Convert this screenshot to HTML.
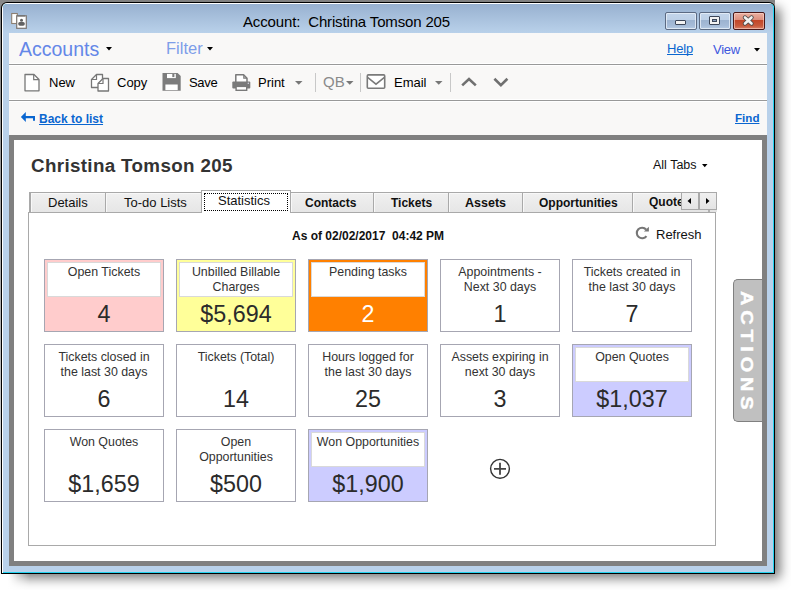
<!DOCTYPE html>
<html><head><meta charset="utf-8">
<style>
*{box-sizing:border-box;margin:0;padding:0}
html,body{width:791px;height:590px;overflow:hidden;background:#fff;font-family:"Liberation Sans",sans-serif;position:relative}
.a{position:absolute}
.t{position:absolute;white-space:pre;line-height:1;text-decoration-skip-ink:none}
.card{position:absolute;width:120px;height:73px;border:1px solid #a6a6b2;background:#fff}
.hd{position:absolute;left:2px;top:2px;width:114px;height:35px;background:#fff;border:1px solid #d9d9d9}
.nb .hd{border-color:#fff}
.tt{position:absolute;left:0;top:2px;width:112px;text-align:center;font-size:12.4px;line-height:15px;color:#333;white-space:nowrap}
.vv{position:absolute;left:0;top:42px;width:118px;text-align:center;font-size:23.3px;line-height:24px;color:#2b2b2b;white-space:nowrap}
.tab{position:absolute;top:192px;height:21px;border:1px solid #a9a9a9;background:linear-gradient(#f0f0f0,#e6e6e6);box-shadow:inset 1px 1px 0 #f8f8f8}
.tl{position:absolute;top:196px;font-size:13px;line-height:1;color:#111;white-space:pre}
.tb{font-weight:bold;font-size:12px;top:197px}
</style></head><body>
<!-- shadow / backdrop -->
<div class="a" style="left:0;top:0;width:775px;height:2px;background:#8a8a8a"></div>
<div class="a" style="left:0;top:0;width:9px;height:9px;background:#8a8a8a"></div>
<div class="a" style="left:766px;top:0;width:9px;height:7px;background:#8a8a8a"></div>
<div class="a" style="left:0;top:0;width:1px;height:574px;background:linear-gradient(#8a8a8a,#bdbdbd 60%,#fff)"></div>
<div class="a" style="left:1px;top:2px;width:774px;height:572px;box-shadow:6px 5px 11px -1px rgba(0,0,0,.55)"></div>
<div class="a" style="left:0;top:574px;width:30px;height:16px;background:linear-gradient(to right,#fff 25%,rgba(255,255,255,0))"></div>
<!-- window -->
<div class="a" style="left:1px;top:2px;width:774px;height:572px;background:#000;border-radius:6px 6px 0 0"></div>
<div class="a" style="left:2px;top:3px;width:772px;height:570px;background:#fff;border-radius:5px 5px 0 0"></div>
<div class="a" style="left:3px;top:4px;width:771px;height:569px;background:#22d3f0;border-radius:4px 4px 0 0"></div>
<div class="a" style="left:3px;top:4px;width:770px;height:568px;background:linear-gradient(#98b1d0,#b9d1ea 29px,#b9d1ea);border-radius:4px 4px 0 0"></div>

<!-- title icon -->
<svg class="a" style="left:8px;top:10px" width="24" height="22" viewBox="0 0 24 22">
 <rect x="3.7" y="3.5" width="5.6" height="10" fill="#fff" stroke="#8c7f72" stroke-width="1.1"/>
 <rect x="8.7" y="5.8" width="9.6" height="12.5" fill="#fff" stroke="#7a7470" stroke-width="1.2"/>
 <rect x="9.3" y="5.3" width="7.8" height="1.2" fill="#6f6f6f"/>
 <circle cx="13.5" cy="10.2" r="1.5" fill="#5f5f5f"/>
 <rect x="10.2" y="11.9" width="6.6" height="3.8" rx="1.7" fill="#626262"/>
</svg>
<div class="t" style="left:243px;top:14px;font-size:15px;color:#000;letter-spacing:-0.15px">Account:  Christina Tomson 205</div>
<!-- caption buttons -->
<div class="a" style="left:665px;top:12px;width:32px;height:18px;border:1px solid #5b6a82;border-radius:2px;background:linear-gradient(#c3d5ea,#bdd0e7 44%,#9cb3d0 46%,#a6bcd8 80%,#b7cce5);box-shadow:inset 0 0 0 1px rgba(235,242,250,.75)"></div>
<div class="a" style="left:675px;top:20px;width:11px;height:5px;border:1px solid #3c4658;border-radius:1px;background:#f2f2f2"></div>
<div class="a" style="left:699px;top:12px;width:32px;height:18px;border:1px solid #5b6a82;border-radius:2px;background:linear-gradient(#c3d5ea,#bdd0e7 44%,#9cb3d0 46%,#a6bcd8 80%,#b7cce5);box-shadow:inset 0 0 0 1px rgba(235,242,250,.75)"></div>
<div class="a" style="left:709px;top:16px;width:11px;height:9px;border:1px solid #3c4658;border-radius:1px;background:#f2f2f2"></div>
<div class="a" style="left:712px;top:19px;width:5px;height:3px;background:#8aa0bf;border:1px solid #3c4658"></div>
<div class="a" style="left:733px;top:12px;width:32px;height:18px;border:1px solid #4a1818;border-radius:2px;background:linear-gradient(#eab0a2,#dd8e7c 44%,#c24628 46%,#c85a3c 80%,#d8826a);box-shadow:inset 0 0 0 1px rgba(255,220,210,.55)"></div>
<svg class="a" style="left:741px;top:14px" width="16" height="13" viewBox="0 0 16 13"><path d="M4 3.5L10.5 9.5M10.5 3.5L4 9.5" stroke="#4a4a4a" stroke-width="4.4" stroke-linecap="round"/><path d="M4 3.5L10.5 9.5M10.5 3.5L4 9.5" stroke="#f2f2f2" stroke-width="2.6" stroke-linecap="round"/></svg>
<!-- content top area -->
<div class="a" style="left:9px;top:33px;width:758px;height:102px;background:#f9f8f7"></div>
<div class="a" style="left:9px;top:63px;width:758px;height:1px;background:#fff"></div>
<div class="a" style="left:9px;top:64px;width:758px;height:1px;background:#999"></div>
<div class="a" style="left:9px;top:65px;width:758px;height:1px;background:#fff"></div>
<div class="a" style="left:9px;top:99px;width:758px;height:1px;background:#fff"></div>
<div class="a" style="left:9px;top:100px;width:758px;height:1px;background:#999"></div>
<div class="a" style="left:9px;top:101px;width:758px;height:1px;background:#fff"></div>
<!-- nav row -->
<div class="t" style="left:19px;top:40px;font-size:19.5px;color:#6487e8">Accounts</div>
<svg class="a" style="left:106px;top:47px" width="6" height="4"><path d="M0 0h6l-3 3.5z" fill="#000"/></svg>
<div class="t" style="left:166px;top:40px;font-size:16.5px;color:#7d9de9">Filter</div>
<svg class="a" style="left:207px;top:47px" width="6" height="4"><path d="M0 0h6l-3 3.5z" fill="#000"/></svg>
<div class="t" style="left:667px;top:42px;font-size:13px;color:#0a66d0;text-decoration:underline;letter-spacing:-0.2px">Help</div>
<div class="t" style="left:713px;top:43px;font-size:13px;color:#3d57de;letter-spacing:-0.25px">View</div>
<svg class="a" style="left:754px;top:48px" width="6" height="4"><path d="M0 0h6l-3 3.5z" fill="#000"/></svg>

<!-- toolbar -->
<svg class="a" style="left:20px;top:71px" width="25" height="23" viewBox="0 0 25 23">
 <path d="M5 3.5H14L19 8.5V19.8H5Z" fill="#fff" stroke="#777" stroke-width="1.3" stroke-linejoin="round"/>
 <path d="M13.7 3.5V8.7H19" fill="none" stroke="#777" stroke-width="1.2"/>
</svg>
<div class="t" style="left:49px;top:76px;font-size:13px;color:#000">New</div>
<svg class="a" style="left:88px;top:71px" width="25" height="23" viewBox="0 0 25 23">
 <path d="M3.5 8.5L8.5 3.5H14.5V16.5H3.5Z" fill="#fff" stroke="#777" stroke-width="1.3" stroke-linejoin="round"/>
 <path d="M3.5 8.5H8.5V3.5" fill="none" stroke="#777" stroke-width="1.2"/>
 <path d="M10 12.5L15 7.5H20.5V20H10Z" fill="#fff" stroke="#777" stroke-width="1.3" stroke-linejoin="round"/>
 <path d="M10 12.5H15V7.5" fill="none" stroke="#777" stroke-width="1.2"/>
</svg>
<div class="t" style="left:117px;top:76px;font-size:13px;color:#000">Copy</div>
<svg class="a" style="left:159px;top:71px" width="25" height="23" viewBox="0 0 25 23">
 <path d="M3.5 2H18.6L21.7 5.1V19.7H3.5Z" fill="#7c7c7c"/>
 <rect x="8" y="2.9" width="8.8" height="4.2" fill="#fff"/>
 <rect x="13.3" y="2.9" width="2.1" height="3.2" fill="#7c7c7c"/>
 <rect x="6.4" y="13.5" width="12.3" height="5.6" fill="#fff"/>
</svg>
<div class="t" style="left:189px;top:76px;font-size:13px;color:#000;letter-spacing:-0.3px">Save</div>
<svg class="a" style="left:229px;top:71px" width="25" height="23" viewBox="0 0 25 23">
 <path d="M6.8 11V3.8H14.6L18 7.2V11" fill="#fff" stroke="#7a7a7a" stroke-width="1.5" stroke-linejoin="round"/>
 <path d="M14.8 4V7.2H18" fill="none" stroke="#7a7a7a" stroke-width="1.2"/>
 <rect x="3.3" y="10.6" width="18" height="7" rx="1" fill="#7a7a7a"/>
 <rect x="7.1" y="15.4" width="10.6" height="3.9" fill="#fff" stroke="#7a7a7a" stroke-width="1.4"/>
 <circle cx="19.3" cy="12.3" r="0.7" fill="#dde"/>
</svg>
<div class="t" style="left:258px;top:76px;font-size:13px;color:#000">Print</div>
<svg class="a" style="left:295px;top:81px" width="8" height="4"><path d="M0 0h7.5l-3.75 3.8z" fill="#777"/></svg>
<div class="a" style="left:315px;top:73px;width:1px;height:19px;background:#c8c8c8"></div>
<div class="t" style="left:323px;top:74px;font-size:15px;color:#8a8a8a">QB</div>
<svg class="a" style="left:346px;top:81px" width="8" height="4"><path d="M0 0h7.5l-3.75 3.8z" fill="#777"/></svg>
<div class="a" style="left:360px;top:73px;width:1px;height:19px;background:#c8c8c8"></div>
<svg class="a" style="left:364px;top:71px" width="25" height="23" viewBox="0 0 25 23">
 <rect x="3.3" y="3.9" width="17.4" height="13.3" rx="1" fill="#fff" stroke="#7a7a7a" stroke-width="1.6"/>
 <path d="M3.6 6.4L12 13.2L20.4 6.4" fill="none" stroke="#7a7a7a" stroke-width="1.5"/>
</svg>
<div class="t" style="left:394px;top:76px;font-size:13px;color:#000">Email</div>
<svg class="a" style="left:435px;top:81px" width="8" height="4"><path d="M0 0h7.5l-3.75 3.8z" fill="#777"/></svg>
<div class="a" style="left:450px;top:73px;width:1px;height:19px;background:#c8c8c8"></div>
<svg class="a" style="left:460px;top:76px" width="19" height="12" viewBox="0 0 19 12"><path d="M2.2 9.4L9 3L15.8 9.4" fill="none" stroke="#707070" stroke-width="2.6"/></svg>
<svg class="a" style="left:492px;top:76px" width="19" height="12" viewBox="0 0 19 12"><path d="M2.4 2.7L8.9 9.1L15.4 2.7" fill="none" stroke="#707070" stroke-width="2.6"/></svg>
<!-- back row -->
<svg class="a" style="left:17px;top:106px" width="25" height="23" viewBox="0 0 25 23">
 <path d="M3.9 10.9L8.8 5.9V10H18V14.8H16V12.3H8.8V16Z" fill="#0a66d0"/>
</svg>
<div class="t" style="left:39px;top:113px;font-size:12px;font-weight:bold;color:#0a66d0;text-decoration:underline">Back to list</div>
<div class="t" style="left:735px;top:112px;font-size:11.6px;font-weight:bold;color:#0a66d0;text-decoration:underline">Find</div>
<!-- grey frame + inner -->
<div class="a" style="left:9px;top:135px;width:758px;height:431px;background:#808080"></div>
<div class="a" style="left:14px;top:140px;width:748px;height:421px;background:#fff"></div>

<!-- record header -->
<div class="t" style="left:31px;top:157px;font-size:18.8px;font-weight:bold;color:#333;letter-spacing:0.35px">Christina Tomson 205</div>
<div class="t" style="left:653px;top:159px;font-size:12.5px;color:#111">All Tabs</div>
<svg class="a" style="left:702px;top:164px" width="6" height="4"><path d="M0 0h5.5l-2.75 3.3z" fill="#000"/></svg>
<!-- panel -->
<div class="a" style="left:28px;top:212px;width:688px;height:334px;border:1px solid #a9a9a9;background:#fff"></div>
<!-- tabs -->
<div class="tab" style="left:29px;width:77px;border-left:2px solid #a9a9a9"></div>
<div class="tab" style="left:105px;width:97px"></div>
<div class="tab" style="left:290px;width:84px"></div>
<div class="tab" style="left:373px;width:76px"></div>
<div class="tab" style="left:448px;width:75px"></div>
<div class="tab" style="left:522px;width:111px"></div>
<div class="a" style="left:632px;top:192px;width:49px;height:21px;overflow:hidden"><div class="tab" style="left:0;top:0;width:80px"></div></div>
<div class="a" style="left:201px;top:190px;width:90px;height:23px;border:1px solid #a9a9a9;border-bottom:none;background:#fff"></div>
<div class="a" style="left:204px;top:193px;width:84px;height:18px;border:1px dotted #000"></div>
<div class="tl" style="left:48px">Details</div>
<div class="tl" style="left:124px">To-do Lists</div>
<div class="tl" style="left:218px;top:194px">Statistics</div>
<div class="tl tb" style="left:305px">Contacts</div>
<div class="tl tb" style="left:391px">Tickets</div>
<div class="tl tb" style="left:465px;font-size:12.5px">Assets</div>
<div class="tl tb" style="left:539px">Opportunities</div>
<div class="a" style="left:640px;top:192px;width:41px;height:20px;overflow:hidden"><div class="tl tb" style="left:9px;top:4px">Quotes</div></div>
<div class="a" style="left:681px;top:192px;width:18px;height:18px;border:1px solid #a9a9a9;background:linear-gradient(#f0f0f0,#e4e4e4)"></div>
<div class="a" style="left:699px;top:192px;width:18px;height:18px;border:1px solid #a9a9a9;background:linear-gradient(#f0f0f0,#e4e4e4)"></div>
<div class="a" style="left:681px;top:210px;width:36px;height:2px;background:#e4e4e4"></div>
<div class="a" style="left:708px;top:210px;width:2px;height:2px;background:#b0b0b0"></div>
<svg class="a" style="left:687px;top:198px" width="5" height="6"><path d="M4 0v6l-3.5-3z" fill="#000"/></svg>
<svg class="a" style="left:706px;top:198px" width="5" height="6"><path d="M0 0v6l3.5-3z" fill="#000"/></svg>
<!-- stats header -->
<div class="t" style="left:292px;top:230px;font-size:12px;font-weight:bold;color:#111">As of 02/02/2017  04:42 PM</div>
<svg class="a" style="left:633px;top:224px" width="18" height="18" viewBox="0 0 18 18">
 <path d="M13.44 12.04A5.3 5.3 0 1 1 13.1 5.5" fill="none" stroke="#767676" stroke-width="2.1"/>
 <path d="M10.9 7.6H15.9V2.7Z" fill="#767676"/>
</svg>
<div class="t" style="left:656px;top:228px;font-size:13px;color:#111">Refresh</div>
<!-- cards -->
<div class="card" style="left:44px;top:259px;background:#ffcccc"><div class="hd"><div class="tt">Open Tickets</div></div><div class="vv">4</div></div>
<div class="card" style="left:176px;top:259px;background:#ffff99"><div class="hd"><div class="tt">Unbilled Billable<br>Charges</div></div><div class="vv">$5,694</div></div>
<div class="card" style="left:308px;top:259px;background:#ff8000"><div class="hd"><div class="tt">Pending tasks</div></div><div class="vv" style="color:#fff">2</div></div>
<div class="card nb" style="left:440px;top:259px"><div class="hd"><div class="tt">Appointments -<br>Next 30 days</div></div><div class="vv">1</div></div>
<div class="card nb" style="left:572px;top:259px"><div class="hd"><div class="tt">Tickets created in<br>the last 30 days</div></div><div class="vv">7</div></div>
<div class="card nb" style="left:44px;top:344px"><div class="hd"><div class="tt">Tickets closed in<br>the last 30 days</div></div><div class="vv">6</div></div>
<div class="card nb" style="left:176px;top:344px"><div class="hd"><div class="tt">Tickets (Total)</div></div><div class="vv">14</div></div>
<div class="card nb" style="left:308px;top:344px"><div class="hd"><div class="tt">Hours logged for<br>the last 30 days</div></div><div class="vv">25</div></div>
<div class="card nb" style="left:440px;top:344px"><div class="hd"><div class="tt">Assets expiring in<br>next 30 days</div></div><div class="vv">3</div></div>
<div class="card" style="left:572px;top:344px;background:#ccccff"><div class="hd"><div class="tt">Open Quotes</div></div><div class="vv">$1,037</div></div>
<div class="card nb" style="left:44px;top:429px"><div class="hd"><div class="tt">Won Quotes</div></div><div class="vv">$1,659</div></div>
<div class="card nb" style="left:176px;top:429px"><div class="hd"><div class="tt">Open<br>Opportunities</div></div><div class="vv">$500</div></div>
<div class="card" style="left:308px;top:429px;background:#ccccff"><div class="hd"><div class="tt">Won Opportunities</div></div><div class="vv">$1,900</div></div>
<svg class="a" style="left:488px;top:457px" width="24" height="24" viewBox="0 0 24 24">
 <circle cx="12" cy="11.8" r="9.4" fill="none" stroke="#333" stroke-width="1.4"/>
 <path d="M12 5.8v12M6 11.8h12" stroke="#444" stroke-width="1.8"/>
</svg>
<!-- actions -->
<div class="a" style="left:733px;top:279px;width:29px;height:143px;background:#c0c0c0;border:1px solid #808080;border-right:none;border-radius:5px 0 0 5px"></div>
<div class="t" style="left:754px;top:291px;transform-origin:0 0;transform:rotate(90deg) scaleX(1.25);font-size:16px;font-weight:bold;color:#fff;letter-spacing:3.8px;-webkit-text-stroke:0.4px #fff">ACTIONS</div>

</body></html>
